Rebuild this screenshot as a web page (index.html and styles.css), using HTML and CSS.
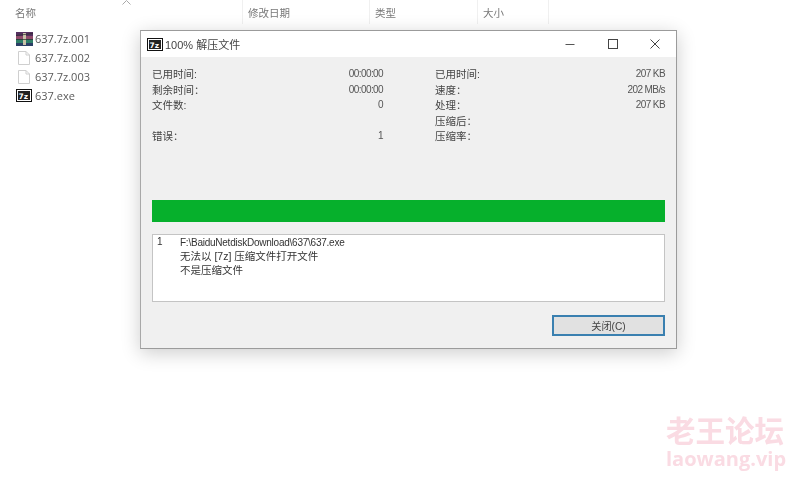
FILE: index.html
```html
<!DOCTYPE html>
<html lang="zh-CN">
<head>
<meta charset="utf-8">
<title>100% 解压文件</title>
<link rel="stylesheet" href="styles.css">
</head>
<body>
<main class="explorer">
  <header class="columns">
    <div class="col col-name">名称
      <svg class="sort" width="9" height="5" viewBox="0 0 9 5"><path d="M.5 4.500 4.500.5l4 4" fill="none" stroke="#a9a9a9"/></svg>
    </div>
    <div class="col col-date">修改日期</div>
    <div class="col col-type">类型</div>
    <div class="col col-size">大小</div>
  </header>
  <ul class="files">
    <li class="file">
      <svg class="ficon" width="17" height="14" viewBox="0 0 17 14">
        <rect x="0" y="0" width="17" height="4" fill="#54305f"/><rect x="0" y="4" width="17" height="3" fill="#8f4a6a"/><rect x="0" y="7" width="17" height="4" fill="#2f7f68"/><rect x="0" y="11" width="17" height="3" fill="#2b3f66"/><rect x="7" y="1" width="3" height="12" fill="#c9c3a8"/><path d="M0 3.500l17-2M0 7.500h17" stroke="#2a2a2a" stroke-width=".7"/>
      </svg>
      <span>637.7z.001</span></li>
    <li class="file">
      <svg class="ficon" width="17" height="14" viewBox="0 0 17 14"><path d="M2.500.5h7.500l3.500 3.500v9.500h-11z M10 .5v3.500h3.500" fill="#fff" stroke="#cfcfcf"/></svg>
      <span>637.7z.002</span></li>
    <li class="file">
      <svg class="ficon" width="17" height="14" viewBox="0 0 17 14"><path d="M2.500.5h7.500l3.500 3.500v9.500h-11z M10 .5v3.500h3.500" fill="#fff" stroke="#cfcfcf"/></svg>
      <span>637.7z.003</span></li>
    <li class="file">
      <svg class="ficon" width="17" height="14" viewBox="0 0 17 14"><rect x=".5" y=".5" width="15" height="12" fill="#fff" stroke="#111"/><rect x="2" y="2" width="12" height="9" fill="#222"/><text x="2.500" y="10" class="sz">7z</text></svg>
      <span>637.exe</span></li>
  </ul>
</main>

<section class="dialog">
  <div class="titlebar">
    <svg class="ticon" width="16" height="13" viewBox="0 0 16 13"><rect x=".5" y=".5" width="15" height="12" fill="#fff" stroke="#111"/><rect x="2" y="2" width="12" height="9" fill="#222"/><text x="2.500" y="10" class="sz">7z</text></svg>
    <span class="title">100% 解压文件</span>
    <div class="controls">
      <svg width="12" height="12" viewBox="0 0 12 12"><path d="M1.500 6.500h9" stroke="#555"/></svg>
      <svg width="12" height="12" viewBox="0 0 12 12"><rect x="1.500" y="1.500" width="9" height="9" fill="none" stroke="#444"/></svg>
      <svg width="12" height="12" viewBox="0 0 12 12"><path d="M1.500 1.500l9 9M10.500 1.500l-9 9" stroke="#444"/></svg>
    </div>
  </div>
  <div class="content">
    <div class="stats">
      <dl class="stat-col">
        <div class="row"><dt>已用时间:</dt><dd>00:00:00</dd></div>
        <div class="row"><dt>剩余时间：</dt><dd>00:00:00</dd></div>
        <div class="row"><dt>文件数:</dt><dd>0</dd></div>
        <div class="row"></div>
        <div class="row"><dt>错误：</dt><dd>1</dd></div>
      </dl>
      <dl class="stat-col">
        <div class="row"><dt>已用时间:</dt><dd>207 KB</dd></div>
        <div class="row"><dt>速度：</dt><dd>202 MB/s</dd></div>
        <div class="row"><dt>处理：</dt><dd>207 KB</dd></div>
        <div class="row"><dt>压缩后：</dt><dd></dd></div>
        <div class="row"><dt>压缩率：</dt><dd></dd></div>
      </dl>
    </div>
    <div class="progress"></div>
    <div class="log">
      <span class="log-num">1</span>
      <div class="log-text">
        <div class="log-path">F:\BaiduNetdiskDownload\637\637.exe</div>
        <div class="log-msg">无法以 [7z] 压缩文件打开文件</div>
        <div class="log-msg">不是压缩文件</div>
      </div>
    </div>
    <div class="actions"><button class="close-btn" type="button">关闭(C)</button></div>
  </div>
</section>

<aside class="watermark">
  <div class="wm-cn">老王论坛</div>
  <div class="wm-en">laowang.vip</div>
</aside>
</body>
</html>
```

FILE: styles.css
```css
* { box-sizing: border-box; }
html, body { margin: 0; height: 100%; }
body {
  position: relative;
  width: 800px;
  height: 477px;
  overflow: hidden;
  background: #fff;
  color: #333;
  font-family: "Liberation Sans", "Noto Sans CJK SC", sans-serif;
  filter: blur(.3px);
}
.columns {
  display: grid;
  grid-template-columns: 243px 127px 108px 71px;
  height: 24px;
  font-size: 10.500px;
  color: #787878;
}
.col {
  position: relative;
  padding: 5px 0 0 5px;
  border-right: 1px solid #f0f0f0;
}
.col-name { padding-left: 15px; }
.sort { position: absolute; left: 122px; top: 0; }
.files {
  list-style: none;
  margin: 0;
  padding: 5px 0 0 16px;
  font-family: "Open Sans", "Noto Sans CJK SC", sans-serif;
  font-size: 11px;
  color: #5a5a5a;
}
.file {
  display: flex;
  align-items: center;
  gap: 2px;
  height: 19px;
}
.ficon { flex: none; }
.sz {
  font-family: "DejaVu Sans", sans-serif;
  font-size: 7.500px;
  font-weight: 700;
  fill: #fff;
}
.dialog {
  position: absolute;
  left: 140px;
  top: 30px;
  width: 537px;
  height: 319px;
  background: #f0f0f0;
  border: 1px solid #9b9b9b;
  border-left-color: #a8a8a8;
  box-shadow: 0 4px 18px rgba(0, 0, 0, .2);
  display: flex;
  flex-direction: column;
}
.titlebar {
  display: flex;
  align-items: center;
  height: 26px;
  padding-left: 6px;
  background: #fff;
  flex: none;
}
.ticon { flex: none; }
.title { margin-left: 2px; font-size: 11px; color: #444; }
.controls {
  margin-left: auto;
  display: flex;
  gap: 30.500px;
  padding-right: 15px;
}
.content {
  flex: 1;
  padding: 9px 11px 0 11px;
  display: flex;
  flex-direction: column;
}
.stats {
  display: grid;
  grid-template-columns: 231px 230px;
  column-gap: 52px;
  height: 134px;
  font-size: 10px;
  color: #444;
}
.stat-col { margin: 0; }
.row {
  display: flex;
  justify-content: space-between;
  align-items: center;
  height: 15.500px;
}
.row dt { font-size: 10.500px; }
.row dd { margin: 0; color: #555; letter-spacing: -.6px; }
.progress {
  height: 22px;
  background: #06b02c;
  flex: none;
}
.log {
  margin-top: 12px;
  height: 68px;
  flex: none;
  background: #fff;
  border: 1px solid #c4c4c4;
  display: flex;
  padding: 1px 0 0 4px;
  font-size: 10px;
  color: #333;
}
.log-num { width: 23px; flex: none; }
.log-msg { font-size: 10.500px; line-height: 14px; }
.log-path { line-height: 13px; letter-spacing: -.24px; }
.actions {
  display: flex;
  justify-content: flex-end;
  padding: 13px 0 0;
}
.close-btn {
  width: 113px;
  height: 21px;
  padding: 0 0 1px;
  background: #e1e1e1;
  border: 2px solid #3a80b0;
  border-radius: 0;
  font: 10.200px "Liberation Sans", "Noto Sans CJK SC", sans-serif;
  color: #444;
}
.watermark {
  position: absolute;
  left: 666px;
  top: 412px;
  color: #fadbe3;
  font-weight: 700;
  font-family: "Noto Sans CJK SC", sans-serif;
}
.wm-cn { font-size: 29.500px; line-height: 34px; }
.wm-en {
  font-family: "Open Sans", sans-serif;
  font-weight: 700;
  font-size: 20px;
  line-height: 25px;
}
```
